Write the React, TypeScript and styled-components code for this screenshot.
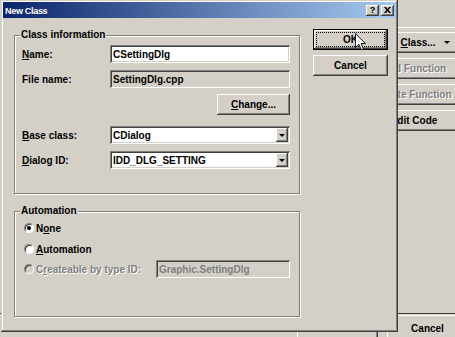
import React from "react";
import styled, { createGlobalStyle, css } from "styled-components";

const FACE = "#d4d0c8";
const SHADOW = "#808080";
const DARK = "#404040";

const GlobalStyle = createGlobalStyle`
  html, body {
    margin: 0;
    padding: 0;
    background: ${FACE};
  }
`;

const raised = css`
  background: ${FACE};
  box-shadow: inset -1px -1px ${DARK}, inset 1px 1px #fff,
    inset -2px -2px ${SHADOW}, inset 2px 2px ${FACE};
`;

const sunken = css`
  box-shadow: inset 1px 1px ${SHADOW}, inset -1px -1px #fff,
    inset 2px 2px ${DARK}, inset -2px -2px ${FACE};
`;

const disabledText = css`
  color: ${SHADOW};
  text-shadow: 1px 1px 0 #fff;
`;

const Desktop = styled.div`
  position: relative;
  width: 455px;
  height: 337px;
  overflow: hidden;
  background: ${FACE};
  font-family: "Liberation Sans", Arial, sans-serif;
  font-size: 10px;
  font-weight: 700;
  color: #000;
`;

/* the ClassWizard window that sits behind the dialog */
const BackWindow = styled.div`
  display: flex;
  flex-direction: column;
  height: 100%;
`;

const ToolColumn = styled.div`
  display: flex;
  flex-direction: column;
  gap: 5px;
  width: 96px;
  margin: 27px 0 0 366px;
  padding-top: 4px;
  border-top: 1px solid #fff;
`;

const ToolButton = styled.div<{ $disabled?: boolean }>`
  ${raised};
  height: 21px;
  display: flex;
  align-items: center;
  justify-content: center;
  gap: 8px;
  ${(p) => p.$disabled && disabledText};
`;

const DropArrow = styled.span`
  width: 0;
  height: 0;
  border-left: 3px solid transparent;
  border-right: 3px solid transparent;
  border-top: 3px solid #000;
`;

const BottomBar = styled.div`
  margin-top: auto;
  height: 24px;
  box-sizing: border-box;
  border-top: 1px solid ${DARK};
  display: flex;
  gap: 9px;
  padding: 1px 0 0 297px;
`;

const BarButton = styled.div`
  ${raised};
  width: 81px;
  height: 26px;
  flex-shrink: 0;
  display: flex;
  justify-content: center;
  padding-top: 8px;
  box-sizing: border-box;
`;

/* the dialog */
const Dialog = styled.div`
  position: absolute;
  left: 1px;
  top: 0;
  width: 397px;
  height: 332px;
  box-sizing: border-box;
  padding: 2px;
  background: ${FACE};
  box-shadow: inset -1px -1px ${DARK}, inset 1px 1px ${FACE},
    inset -2px -2px ${SHADOW}, inset 2px 2px #fff;
  display: flex;
  flex-direction: column;
`;

const TitleBar = styled.div`
  height: 16px;
  flex-shrink: 0;
  display: flex;
  align-items: center;
  padding: 0 2px 0 2px;
  background: linear-gradient(to right, #0a246a, #a6caf0);
`;

const TitleText = styled.span`
  flex: 1;
  color: #fff;
  font-size: 9px;
  letter-spacing: -0.3px;
  padding: 2px 0 0 0;
`;

const CaptionButton = styled.div<{ $gap?: number }>`
  ${raised};
  width: 13px;
  height: 11px;
  margin-left: ${(p) => p.$gap ?? 0}px;
  display: flex;
  align-items: center;
  justify-content: center;
  font-size: 9px;
  line-height: 1;
`;

const Body = styled.div`
  flex: 1;
  display: flex;
  padding: 11px 0 0 11px;
`;

const LeftCol = styled.div`
  width: 287px;
  padding-top: 6px;
  display: flex;
  flex-direction: column;
`;

const RightCol = styled.div`
  margin-left: 12px;
  display: flex;
  flex-direction: column;
  gap: 5px;
`;

const GroupBox = styled.div<{ $height: number; $mt?: number }>`
  position: relative;
  width: 286px;
  height: ${(p) => p.$height}px;
  margin-top: ${(p) => p.$mt ?? 0}px;
  box-sizing: border-box;
  border: 1px solid ${SHADOW};
  box-shadow: 1px 1px 0 #fff, inset 1px 1px 0 #fff;
  padding: 9px 8px 0 7px;
`;

const Legend = styled.span`
  position: absolute;
  top: -7px;
  left: 5px;
  padding: 0 1px;
  line-height: 12px;
  background: ${FACE};
`;

const Row = styled.div<{ $mt?: number }>`
  display: grid;
  grid-template-columns: 88px 180px;
  align-items: center;
  height: 18px;
  margin-top: ${(p) => p.$mt ?? 0}px;
`;

const ButtonRow = styled.div<{ $mt?: number }>`
  display: flex;
  justify-content: flex-end;
  width: 268px;
  margin-top: ${(p) => p.$mt ?? 0}px;
`;

const Label = styled.span<{ $disabled?: boolean }>`
  white-space: nowrap;
  ${(p) => p.$disabled && disabledText};
`;

const TextBox = styled.div<{ $disabled?: boolean; $muted?: boolean; $width?: number }>`
  ${sunken};
  width: ${(p) => p.$width ?? 180}px;
  height: 18px;
  box-sizing: border-box;
  display: flex;
  align-items: center;
  padding-left: 3px;
  background: ${(p) => (p.$disabled ? FACE : "#fff")};
  color: ${(p) => (p.$muted ? SHADOW : "#000")};
  white-space: nowrap;
  overflow: hidden;
`;

const ComboText = styled.span`
  flex: 1;
`;

const ComboButton = styled.div`
  ${raised};
  width: 12px;
  height: 14px;
  margin-right: 2px;
  display: flex;
  align-items: center;
  justify-content: center;
`;

const PushButton = styled.div<{ $width: number; $default?: boolean }>`
  ${raised};
  position: relative;
  width: ${(p) => p.$width}px;
  height: 21px;
  box-sizing: border-box;
  display: flex;
  align-items: center;
  justify-content: center;
  ${(p) =>
    p.$default &&
    css`
      border: 1px solid #000;
      outline: 1px dotted #000;
      outline-offset: -4px;
    `};
`;

const Pointer = styled.svg`
  position: absolute;
  left: 41px;
  top: 3px;
`;

const RadioRow = styled.div<{ $mt?: number; $height?: number }>`
  display: flex;
  align-items: center;
  height: ${(p) => p.$height ?? 14}px;
  margin-top: ${(p) => p.$mt ?? 0}px;
  padding-left: 2px;
`;

const RadioDot = styled.span<{ $checked?: boolean; $disabled?: boolean }>`
  width: 10px;
  height: 10px;
  box-sizing: border-box;
  border-radius: 50%;
  border: 1px solid;
  border-color: ${SHADOW} #fff #fff ${SHADOW};
  box-shadow: inset 1px 1px 0 ${DARK};
  background: ${(p) => (p.$disabled ? FACE : "#fff")};
  display: flex;
  align-items: center;
  justify-content: center;
  margin-right: 2px;
  flex-shrink: 0;
  &::after {
    content: "";
    width: 4px;
    height: 4px;
    border-radius: 50%;
    background: #000;
    display: ${(p) => (p.$checked ? "block" : "none")};
  }
`;

const RadioLabel = styled.span<{ $disabled?: boolean; $width?: number }>`
  white-space: nowrap;
  ${(p) => p.$width && `width: ${p.$width}px;`}
  ${(p) => p.$disabled && disabledText};
`;

function Combo({ value }: { value: string }) {
  return (
    <TextBox style={{ paddingRight: 0 }}>
      <ComboText>{value}</ComboText>
      <ComboButton>
        <DropArrow />
      </ComboButton>
    </TextBox>
  );
}

export default function App() {
  return (
    <Desktop>
      <GlobalStyle />
      <BackWindow>
        <ToolColumn>
          <ToolButton>
            <span>
              Add <u>C</u>lass...
            </span>
            <DropArrow />
          </ToolButton>
          <ToolButton $disabled>Add Function</ToolButton>
          <ToolButton $disabled>Delete Function</ToolButton>
          <ToolButton>
            <span>
              <u>E</u>dit Code
            </span>
          </ToolButton>
        </ToolColumn>
        <BottomBar>
          <BarButton>OK</BarButton>
          <BarButton>Cancel</BarButton>
        </BottomBar>
      </BackWindow>

      <Dialog>
        <TitleBar>
          <TitleText>New Class</TitleText>
          <CaptionButton>?</CaptionButton>
          <CaptionButton $gap={2}>
            <svg width="7" height="6" viewBox="0 0 7 6">
              <path d="M0 0h2l1.5 2 1.5-2h2L4.5 3 7 6H5L3.5 4 2 6H0l2.5-3z" fill="#000" />
            </svg>
          </CaptionButton>
        </TitleBar>

        <Body>
          <LeftCol>
            <GroupBox $height={159}>
              <Legend>Class information</Legend>
              <Row>
                <Label>
                  <u>N</u>ame:
                </Label>
                <TextBox>CSettingDlg</TextBox>
              </Row>
              <Row $mt={7}>
                <Label>File name:</Label>
                <TextBox $disabled>SettingDlg.cpp</TextBox>
              </Row>
              <ButtonRow $mt={6}>
                <PushButton $width={73}>
                  <span>
                    <u>C</u>hange...
                  </span>
                </PushButton>
              </ButtonRow>
              <Row $mt={11}>
                <Label>
                  <u>B</u>ase class:
                </Label>
                <Combo value="CDialog" />
              </Row>
              <Row $mt={7}>
                <Label>
                  <u>D</u>ialog ID:
                </Label>
                <Combo value="IDD_DLG_SETTING" />
              </Row>
            </GroupBox>

            <GroupBox $height={106} $mt={17} style={{ paddingLeft: 7 }}>
              <Legend>Automation</Legend>
              <RadioRow>
                <RadioDot $checked />
                <RadioLabel>
                  N<u>o</u>ne
                </RadioLabel>
              </RadioRow>
              <RadioRow $mt={7}>
                <RadioDot />
                <RadioLabel>
                  <u>A</u>utomation
                </RadioLabel>
              </RadioRow>
              <RadioRow $mt={4} $height={18}>
                <RadioDot $disabled />
                <RadioLabel $disabled $width={120}>
                  C<u>r</u>eateable by type ID:
                </RadioLabel>
                <TextBox $disabled $muted $width={134}>
                  Graphic.SettingDlg
                </TextBox>
              </RadioRow>
            </GroupBox>
          </LeftCol>

          <RightCol>
            <PushButton $width={75} $default>
              OK
              <Pointer width="11" height="18" viewBox="0 0 12 19">
                <path
                  d="M0.5 0.5 V15.5 L4.2 12 L6.8 18 L9.2 17 L6.6 11.2 H11.5 Z"
                  fill="#fff"
                  stroke="#000"
                  strokeWidth="1"
                  strokeLinejoin="miter"
                />
              </Pointer>
            </PushButton>
            <PushButton $width={75}>Cancel</PushButton>
          </RightCol>
        </Body>
      </Dialog>
    </Desktop>
  );
}
